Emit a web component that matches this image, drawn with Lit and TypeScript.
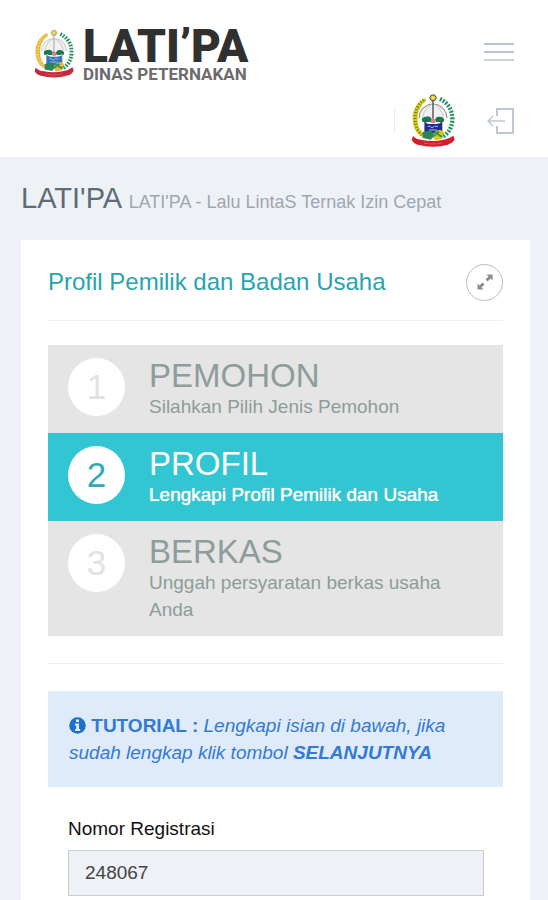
import { LitElement, html, css } from "lit";
import { customElement, property } from "lit/decorators.js";

interface Step {
  title: string;
  text: string;
}

const steps: Step[] = [
  { title: "PEMOHON", text: "Silahkan Pilih Jenis Pemohon" },
  { title: "PROFIL", text: "Lengkapi Profil Pemilik dan Usaha" },
  { title: "BERKAS", text: "Unggah persyaratan berkas usaha Anda" },
];

/* Provincial emblem: rice and cotton wreath, dome, trees, water and ribbon. */
@customElement("region-emblem")
export class RegionEmblem extends LitElement {
  @property({ type: Boolean }) soft = false;

  static styles = css`
    :host {
      display: block;
    }
    svg {
      display: block;
      width: 100%;
      height: 100%;
    }
  `;

  render() {
    const gold = this.soft ? "#e3b83c" : "#d2cc1d";
    const goldDark = this.soft ? "#f4dc8c" : "#77791b";
    const blue = this.soft ? "#2f78b5" : "#202c93";
    const line = this.soft ? "#a9b3ad" : "#4a4a4a";
    const ribbon = this.soft ? "#c6283c" : "#d31f2b";
    const green = this.soft ? "#278a5e" : "#1c8a5c";
    return html`<svg viewBox="22 16 132 158" role="img" aria-label="Lambang daerah">
      <circle cx="88" cy="88" r="48" fill="#fdfdfd" />
      <path d="M46 86A42 42 0 0 1 130 86" fill="#f1f1f1" stroke=${line} stroke-width="2" />
      <path d="M57 82q6-26 31-40q25 14 31 40" fill="none" stroke="#c5c5c5" stroke-width="3" />
      <path d="M65 26C38 38 25 64 27 92C29 120 42 138 62 147L67 139C51 128 42 112 42 92C41 65 51 47 68 35Z" fill=${gold} />
      <path d="M60 31C42 44 33 66 34 92C35 116 46 132 63 143" fill="none" stroke=${goldDark} stroke-width="9" stroke-dasharray="3 6" />
      <path d="M109 29C132 40 147 62 146 91C145 116 133 134 115 143" fill="none" stroke="#e3f3e8" stroke-width="12" />
      <path d="M109 29C132 40 147 62 146 91C145 116 133 134 115 143" fill="none" stroke=${green} stroke-width="13" stroke-dasharray="5 5" />
      <path d="M88 35V92" stroke=${line} stroke-width="4" />
      <path d="M83 17h10l5 8-5 9H83l-5-9Z" fill=${gold} stroke=${line} stroke-width="3" />
      <circle cx="88" cy="25" r="4" fill="#f3e96b" />
      <path d="M54 91q2-10 14-9q10-4 17 8l-4 8H57ZM94 91q3-10 13-9q11-1 15 9l-3 7H97Z" fill="#177a50" />
      <path d="M65 95v46M113 95v46" stroke=${line} stroke-width="6" />
      <path d="M82 92l6-8 7 8v9H82Z" fill="#e77980" />
      <path d="M64 101l14 3h20l16-3v30H64Z" fill=${blue} />
      <path d="M72 111h8l5 5 8-6 10 2M75 122h25" stroke="#a9bce9" stroke-width="3" fill="none" />
      <path d="M57 128l24-5 10 11-9 17-24-5Z" fill="#2b855c" />
      <path d="M88 143q2-19 21-22l13 8-8 20-20 4Z" fill=${gold} />
      <path d="M92 128l24 15M81 146l25-19" stroke="#3c934d" stroke-width="6" />
      <path d="M28 140q9 10 27 12q33 7 65-1q18-3 29-12l4 11q-5 11-20 16q-43 12-88 1q-16-5-21-16Z" fill=${ribbon} />
      <path d="M62 161q26 6 52 0" fill="none" stroke="#f5a9a9" stroke-width="2" stroke-dasharray="4 3" />
    </svg>`;
  }
}

@customElement("app-root")
export class AppRoot extends LitElement {
  @property({ type: Number }) current = 1;

  static styles = css`
    :host {
      display: block;
      min-height: 100vh;
      background: #eef2f7;
      font-family: "Liberation Sans", Arial, sans-serif;
      font-size: 19px;
      line-height: 27px;
      color: #333;
    }
    * {
      box-sizing: border-box;
    }
    h1,
    h2,
    h3,
    p,
    ol {
      margin: 0;
      padding: 0;
      font-weight: 400;
    }
    button {
      display: block;
      margin: 0;
      padding: 0;
      border: 0;
      background: none;
      cursor: pointer;
    }
    button svg,
    .exit svg {
      display: block;
    }
    .header {
      background: #fff;
      padding: 24px 34px 8px;
    }
    .bar {
      display: flex;
      align-items: center;
      justify-content: space-between;
      height: 56px;
    }
    .brand {
      display: flex;
      align-items: center;
      gap: 9px;
      padding-top: 4px;
      color: #303030;
      text-decoration: none;
    }
    .brand-mark {
      width: 40px;
      height: 50px;
    }
    .brand-text {
      display: flex;
      flex-direction: column;
      white-space: nowrap;
    }
    .brand-name {
      font: 900 46px/40px Roboto, sans-serif;
    }
    .brand-sub {
      font: 700 17px/16px Roboto, sans-serif;
      color: #6b6b6b;
    }
    .tools {
      display: flex;
      align-items: center;
      justify-content: flex-end;
      height: 69px;
      padding-top: 12px;
    }
    .avatar {
      display: flex;
      align-items: center;
      height: 25px;
      margin-right: 32px;
      padding-left: 16px;
      border-left: 1px solid #e9edf1;
    }
    .avatar-mark {
      width: 44px;
      height: 54px;
    }
    .main {
      padding: 23px 18px 0 21px;
    }
    .page-title {
      font-size: 29px;
      line-height: 36px;
      color: #5f6b77;
    }
    .page-title small {
      font-size: 18px;
      color: #9ea6b0;
    }
    .card {
      margin-top: 20px;
      padding: 23px 27px 32px;
      background: #fff;
    }
    .card-head {
      display: flex;
      align-items: center;
      justify-content: space-between;
      padding-bottom: 19px;
      border-bottom: 1px solid #f0f1f3;
    }
    .card-title {
      font-size: 24px;
      line-height: 38px;
      color: #27a4b0;
    }
    .expand {
      display: grid;
      place-items: center;
      width: 37px;
      height: 37px;
      border: 1px solid #bdbdbd;
      border-radius: 50%;
    }
    .steps {
      margin: 24px 0 27px;
      list-style: none;
    }
    .step {
      display: flex;
      gap: 24px;
      padding: 13px 20px;
      background: #e5e5e5;
      color: #8e9c9a;
    }
    .number {
      flex: none;
      width: 57px;
      height: 58px;
      border-radius: 50%;
      background: #fff;
      color: #e2e2e2;
      font-size: 35px;
      line-height: 58px;
      text-align: center;
    }
    .step-title {
      font-size: 33px;
      line-height: 35px;
    }
    .step-body {
      min-height: 62px;
    }
    .active {
      background: #32c5d2;
      color: #fff;
    }
    .active .number {
      color: #32a9b5;
    }
    .active .step-text {
      text-shadow: 0 0 1px #fff;
    }
    .rule {
      margin: 0 0 27px;
      border: 0;
      border-top: 1px solid #eeeff1;
    }
    .note {
      padding: 21px;
      background: #e0ebf9;
      color: #327ad5;
    }
    .info {
      display: inline-block;
      vertical-align: -2px;
    }
    .field {
      padding: 28px 19px 0 20px;
    }
    .field label {
      display: block;
      color: #111;
    }
    .field input {
      display: block;
      width: 100%;
      height: 46px;
      margin-top: 8px;
      padding: 0 16px;
      border: 1px solid #c8cdd4;
      border-radius: 0;
      background: #eef1f5;
      color: #444;
      font: inherit;
    }
  `;

  private step(item: Step, index: number) {
    const active = index === this.current;
    return html`<li class="step ${active ? "active" : ""}" aria-current=${active ? "step" : "false"}>
      <span class="number">${index + 1}</span>
      <div class="step-body">
        <h3 class="step-title">${item.title}</h3>
        <p class="step-text">${item.text}</p>
      </div>
    </li>`;
  }

  render() {
    return html`
      <header class="header">
        <div class="bar">
          <a class="brand" href="#">
            <region-emblem class="brand-mark" soft></region-emblem>
            <span class="brand-text">
              <span class="brand-name">LATI’PA</span>
              <span class="brand-sub">DINAS PETERNAKAN</span>
            </span>
          </a>
          <button type="button" aria-label="Menu">
            <svg width="30" height="20" viewBox="0 0 30 20">
              <path d="M0 2h30M0 10h30" stroke="#b9c4d1" stroke-width="2" />
              <path d="M0 18h30" stroke="#ccd1d6" stroke-width="2" />
            </svg>
          </button>
        </div>
        <div class="tools">
          <a class="avatar" href="#" aria-label="Akun"><region-emblem class="avatar-mark"></region-emblem></a>
          <a class="exit" href="#" aria-label="Keluar">
            <svg width="27" height="28" viewBox="0 0 27 28" fill="none" stroke="#bec8d2" stroke-width="2">
              <path d="M10 9V2h16v24H10v-7" />
              <path d="M18 14H1M6 9l-5 5 5 5" stroke-width="1.5" />
            </svg>
          </a>
        </div>
      </header>
      <main class="main">
        <h1 class="page-title">LATI'PA <small>LATI'PA - Lalu LintaS Ternak Izin Cepat</small></h1>
        <section class="card">
          <div class="card-head">
            <h2 class="card-title">Profil Pemilik dan Badan Usaha</h2>
            <button class="expand" type="button" aria-label="Layar penuh">
              <svg width="16" height="16" viewBox="0 0 16 16">
                <path d="M9.500 0.500h6V6.500l-2-2L10.500 7.500l-2-2 3-3ZM6.500 15.500h-6V9.500l2 2L5.500 8.500l2 2-3 3Z" fill="#8c8c8c" />
              </svg>
            </button>
          </div>
          <ol class="steps">
            ${steps.map((item, index) => this.step(item, index))}
          </ol>
          <hr class="rule" />
          <div class="note">
            <p>
              <svg class="info" width="17" height="17" viewBox="0 0 17 17" aria-hidden="true">
                <circle cx="8.500" cy="8.500" r="8.300" fill="#1f6fce" />
                <path d="M7 2.500h3v2.500H7ZM6 6.500h4v5.500h1.200v2H6v-2h1.200V8.500H6Z" fill="#e0ebf9" />
              </svg>
              <b>TUTORIAL :</b>
              <i>Lengkapi isian di bawah, jika sudah lengkap klik tombol <b>SELANJUTNYA</b></i>
            </p>
          </div>
          <div class="field">
            <label for="registration">Nomor Registrasi</label>
            <input id="registration" type="text" value="248067" readonly />
          </div>
        </section>
      </main>
    `;
  }
}
